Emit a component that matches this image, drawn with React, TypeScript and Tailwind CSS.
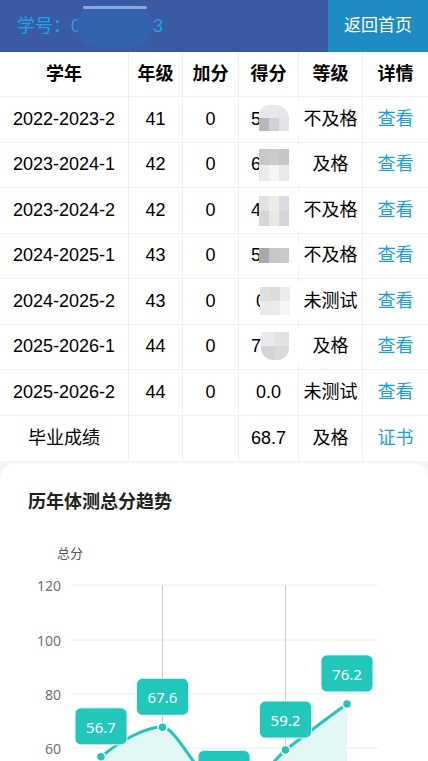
import React from "react";

const cols = "grid grid-cols-[129px_54px_56px_60px_64px_65px]";
const cell = "flex items-center justify-center border-r border-[#f0f0f0] last:border-r-0";

type Mosaic = { left: number; top: number; w?: number; h?: number; cells: string[][]; round?: string };

type Row = {
  year: string;
  grade: string;
  bonus: string;
  score: string;
  level: string;
  link: string;
  mosaic?: Mosaic;
};

const rows: Row[] = [
  {
    year: "2022-2023-2",
    grade: "41",
    bonus: "0",
    score: "56.7",
    level: "不及格",
    link: "查看",
    mosaic: {
      left: 8,
      top: -14,
      h: 13,
      round: "rounded-tr-[14px] rounded-tl-[10px]",
      cells: [
        ["#e8e8ea", "#e8e8ea", "#e6e6e8"],
        ["#b4b8c0", "#d1d1d5", "#e4e4e6"],
      ],
    },
  },
  {
    year: "2023-2024-1",
    grade: "42",
    bonus: "0",
    score: "67.6",
    level: "及格",
    link: "查看",
    mosaic: {
      left: 8,
      top: -16,
      h: 16,
      cells: [
        ["#c8c8cc", "#cdcbca", "#c6c5c8"],
        ["#ebebed", "#f4f5f7", "#e8e9eb"],
      ],
    },
  },
  {
    year: "2023-2024-2",
    grade: "42",
    bonus: "0",
    score: "41.0",
    level: "不及格",
    link: "查看",
    mosaic: {
      left: 8,
      top: -14,
      h: 15,
      cells: [
        ["#e4e2df", "#efebe6", "#dcdcde"],
        ["#d6d6d8", "#ebe7e1", "#d6d6d9"],
      ],
    },
  },
  {
    year: "2024-2025-1",
    grade: "43",
    bonus: "0",
    score: "59.2",
    level: "不及格",
    link: "查看",
    mosaic: {
      left: 8,
      top: -8,
      h: 15,
      cells: [["#a9a9ae", "#c8c7c8", "#cbcaca"]],
    },
  },
  {
    year: "2024-2025-2",
    grade: "43",
    bonus: "0",
    score: "0.0",
    level: "未测试",
    link: "查看",
    mosaic: {
      left: 4,
      top: -14,
      h: 14,
      cells: [
        ["#e0dfdc", "#dedcd8", "#ececec"],
        ["#ebeae8", "#ecebea", "#f5f5f5"],
      ],
    },
  },
  {
    year: "2025-2026-1",
    grade: "44",
    bonus: "0",
    score: "76.2",
    level: "及格",
    link: "查看",
    mosaic: {
      left: 10,
      top: -15,
      w: 14,
      h: 14,
      round: "rounded-b-[12px]",
      cells: [
        ["#eaeaec", "#e2e2e4"],
        ["#d4d4d6", "#dadada"],
      ],
    },
  },
  { year: "2025-2026-2", grade: "44", bonus: "0", score: "0.0", level: "未测试", link: "查看" },
];

function MosaicBox({ m }: { m: Mosaic }) {
  const w = m.w ?? 10;
  const h = m.h ?? 11;
  return (
    <span
      className="absolute block bg-white"
      style={{ left: m.left, top: "50%", marginTop: m.top - 4, paddingTop: 4, paddingBottom: 4, width: 40 }}
    >
      <span className={"flex flex-col overflow-hidden " + (m.round ?? "")} style={{ width: w * m.cells[0].length }}>
        {m.cells.map((r, i) => (
          <span key={i} className="flex">
            {r.map((c, j) => (
              <span key={j} className="block" style={{ background: c, width: w, height: h }} />
            ))}
          </span>
        ))}
      </span>
    </span>
  );
}

const pts = [
  { x: 101, v: 56.7 },
  { x: 162.5, v: 67.6 },
  { x: 224, v: 41.0 },
  { x: 285.5, v: 59.2 },
  { x: 347, v: 76.2 },
];
const yOf = (v: number) => 585 + (120 - v) * 2.715;

const linePath =
  "M101,757 C120,741 145,727 162.5,727 C175,727 195,770 224,800 C250,800 265,768 285.5,750 C305,735 330,716 347,704";

function Chart() {
  return (
    <svg
      viewBox="0 514 428 300"
      width={428}
      height={300}
      className="block"
      style={{ fontFamily: '"Noto Sans", "Noto Sans CJK SC", sans-serif' }}
    >
      <text x={57} y={553} fontSize={13} fill="#555" dominantBaseline="central">
        总分
      </text>
      {[
        [120, 585],
        [100, 640],
        [80, 694],
        [60, 748],
      ].map(([v, y]) => (
        <g key={v}>
          <line x1={71} x2={378} y1={y} y2={y} stroke="#eeeeee" strokeWidth={1} />
          <text x={61} y={y} fontSize={14} fill="#6e7079" textAnchor="end" dominantBaseline="central">
            {v}
          </text>
        </g>
      ))}
      <line x1={162.5} x2={162.5} y1={585} y2={814} stroke="#cccccc" />
      <line x1={285.5} x2={285.5} y1={585} y2={814} stroke="#cccccc" />
      <path d={linePath + " L347,814 L101,814 Z"} fill="#e3f7f5" />
      <path d={linePath} fill="none" stroke="#23c6bb" strokeWidth={3} />
      {pts.map((p) => {
        const y = yOf(p.v);
        return (
          <g key={p.x}>
            <circle cx={p.x} cy={y} r={4.5} fill="#23c6bb" stroke="#ffffff" strokeWidth={1.5} />
            <rect x={p.x - 26} y={y - 49} width={52} height={37} rx={6} fill="#23c6bb" stroke="#e6f8f6" strokeWidth={1} />
            <text x={p.x} y={y - 30} fontSize={15} fill="#ffffff" textAnchor="middle" dominantBaseline="central">
              {p.v.toFixed(1)}
            </text>
          </g>
        );
      })}
    </svg>
  );
}

export default function App() {
  return (
    <div
      className="min-h-[761px] bg-[#f5f5f5] text-[18px] text-black"
      style={{ fontFamily: '"Liberation Sans", "Noto Sans CJK SC", sans-serif' }}
    >
      <header className="flex h-[52px] bg-[#3a5ba4]">
        <div className="flex flex-1 items-center pl-[17px] text-[18px] text-[#1fa2e6]">
          <span>学号：0</span>
          <span className="relative -ml-[4px] h-[44px] w-[76px] rounded-[22px] bg-[#3463ad]">
            <span className="absolute left-[6px] right-[6px] top-[2px] h-[3px] rounded-full bg-[#8fa6d6]" />
          </span>
          <span>3</span>
        </div>
        <button className="flex w-[100px] items-center justify-center bg-[#1e8bc3] text-[17px] text-white">
          返回首页
        </button>
      </header>

      <div className="bg-white">
        <div className={cols + " h-[45px] border-b border-[#f0f0f0] font-bold"}>
          {["学年", "年级", "加分", "得分", "等级", "详情"].map((h) => (
            <div key={h} className={cell}>
              {h}
            </div>
          ))}
        </div>
        {rows.map((r) => (
          <div key={r.year} className={cols + " h-[45.5px] border-b border-[#f0f0f0]"}>
            <div className={cell}>{r.year}</div>
            <div className={cell}>{r.grade}</div>
            <div className={cell}>{r.bonus}</div>
            <div className={cell}>
              <span className="relative">
                {r.score}
                {r.mosaic ? <MosaicBox m={r.mosaic} /> : null}
              </span>
            </div>
            <div className={cell}>{r.level}</div>
            <div className={cell + " text-[#1ba1e2]"}>{r.link}</div>
          </div>
        ))}
        <div className={cols + " h-[45.5px]"}>
          <div className={cell}>毕业成绩</div>
          <div className={cell} />
          <div className={cell} />
          <div className={cell}>68.7</div>
          <div className={cell}>及格</div>
          <div className={cell + " text-[#1ba1e2]"}>证书</div>
        </div>
      </div>

      <section className="mt-[2px] rounded-t-2xl bg-white">
        <h2 className="pl-[28px] pt-[27px] text-[18px] font-bold leading-6 text-[#222]">历年体测总分趋势</h2>
        <Chart />
      </section>
    </div>
  );
}
